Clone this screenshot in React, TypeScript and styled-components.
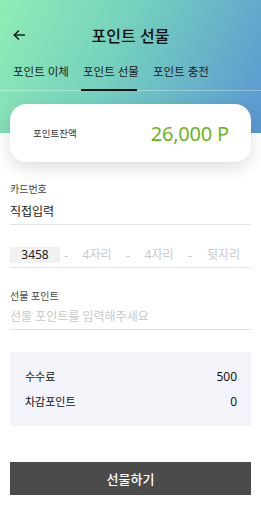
import styled, { createGlobalStyle } from 'styled-components'

const GlobalStyle = createGlobalStyle`
  html, body {
    margin: 0;
    padding: 0;
    background: #ffffff;
  }
  body {
    font-family: 'Noto Sans', 'Noto Sans CJK KR', sans-serif;
    color: #222;
  }
`

const Page = styled.div`
  width: 261px;
  min-height: 512px;
  background: #fff;
`

const Header = styled.header`
  height: 133px;
  background: linear-gradient(115deg, #90edb4 0%, #74cfbf 45%, #5a96d3 100%);
`

const TitleBar = styled.div`
  position: relative;
  height: 26px;
  padding-top: 23px;
  display: flex;
  align-items: center;
  justify-content: center;
`

const BackButton = styled.button`
  position: absolute;
  left: 9px;
  top: 25px;
  width: 20px;
  height: 20px;
  padding: 0;
  border: 0;
  background: none;
  display: flex;
  align-items: center;
  justify-content: center;
`

const Title = styled.h1`
  margin: 0;
  font-size: 16px;
  line-height: 22px;
  font-weight: 500;
  color: #111;
`

const Tabs = styled.nav`
  margin-top: 13px;
  height: 28px;
  display: flex;
  padding: 0 0 0 13px;
  border-bottom: 1px solid rgba(255, 255, 255, 0.35);
`

const Tab = styled.div<{ $active?: boolean }>`
  position: relative;
  width: 70px;
  padding-top: 2px;
  font-size: 11.5px;
  line-height: 16px;
  font-weight: 400;
  color: #1a1a1a;
  &::after {
    content: '';
    position: absolute;
    left: -2px;
    width: 56px;
    bottom: -1px;
    height: 2px;
    background: ${(p) => (p.$active ? '#111' : 'transparent')};
  }
`

const BalanceCard = styled.div`
  margin: -29px 10px 0;
  height: 58px;
  padding: 0 22px 0 23px;
  border-radius: 16px;
  background: #fff;
  box-shadow: 0 6px 16px rgba(0, 0, 0, 0.13);
  display: flex;
  align-items: center;
  justify-content: space-between;
  position: relative;
`

const BalanceLabel = styled.span`
  font-size: 9.5px;
  color: #333;
`

const BalanceValue = styled.span`
  font-size: 20px;
  font-weight: 400;
  color: #6cb41b;
  letter-spacing: -0.2px;
`

const Form = styled.div`
  padding: 0 10px;
`

const Label = styled.div<{ $top: number }>`
  margin-top: ${(p) => p.$top}px;
  height: 14px;
  font-size: 10px;
  line-height: 14px;
  color: #444;
`

const Field = styled.div<{ $top: number }>`
  margin-top: ${(p) => p.$top}px;
  height: 18px;
  padding-bottom: 3px;
  border-bottom: 1px solid #e2e2e2;
  display: flex;
  align-items: center;
`

const FieldText = styled.span<{ $placeholder?: boolean }>`
  font-size: 12px;
  line-height: 18px;
  color: ${(p) => (p.$placeholder ? '#c9c9c9' : '#222')};
`

const CardRow = styled(Field)`
  height: 16px;
  padding-bottom: 4px;
`

const CardBox = styled.span`
  width: 50px;
  height: 16px;
  background: #f1f1f1;
  font-size: 12px;
  line-height: 16px;
  text-align: center;
  color: #222;
`

const Dash = styled.span`
  width: 12px;
  text-align: center;
  font-size: 11px;
  line-height: 16px;
  color: #bbb;
`

const CardPart = styled.span<{ $w: number }>`
  width: ${(p) => p.$w}px;
  text-align: center;
  font-size: 12px;
  line-height: 16px;
  color: #c9c9c9;
`

const FeeBox = styled.div`
  margin-top: 22px;
  height: 74px;
  padding: 0 14px 0 15px;
  background: #f3f4f9;
  display: flex;
  flex-direction: column;
  justify-content: center;
  gap: 9px;
`

const FeeRow = styled.div`
  display: flex;
  justify-content: space-between;
  align-items: center;
  font-size: 11px;
  line-height: 16px;
  color: #111;
`

const FeeValue = styled.span`
  font-size: 12px;
  font-weight: 400;
`

const SubmitButton = styled.button`
  display: block;
  margin-top: 36px;
  width: 100%;
  height: 33px;
  border: 0;
  background: #4b4b4b;
  color: #fff;
  font-family: 'Noto Sans CJK KR', 'Noto Sans', sans-serif;
  font-size: 13px;
  font-weight: 500;
`

const ArrowIcon = () => (
  <svg width="14" height="14" viewBox="0 0 24 24" fill="none" stroke="#111" strokeWidth="2.4" strokeLinecap="square">
    <path d="M21 12H4" />
    <path d="M11 5l-7 7 7 7" />
  </svg>
)

export default function App() {
  return (
    <Page>
      <GlobalStyle />
      <Header>
        <TitleBar>
          <BackButton aria-label="뒤로">
            <ArrowIcon />
          </BackButton>
          <Title>포인트 선물</Title>
        </TitleBar>
        <Tabs>
          <Tab>포인트 이체</Tab>
          <Tab $active>포인트 선물</Tab>
          <Tab>포인트 충전</Tab>
        </Tabs>
      </Header>
      <BalanceCard>
        <BalanceLabel>포인트잔액</BalanceLabel>
        <BalanceValue>26,000 P</BalanceValue>
      </BalanceCard>
      <Form>
        <Label $top={20}>카드번호</Label>
        <Field $top={7}>
          <FieldText>직접입력</FieldText>
        </Field>
        <CardRow $top={22}>
          <CardBox>3458</CardBox>
          <Dash>-</Dash>
          <CardPart $w={50}>4자리</CardPart>
          <Dash>-</Dash>
          <CardPart $w={50}>4자리</CardPart>
          <Dash>-</Dash>
          <CardPart $w={55}>뒷자리</CardPart>
        </CardRow>
        <Label $top={21}>선물 포인트</Label>
        <Field $top={5}>
          <FieldText $placeholder>선물 포인트를 입력해주세요</FieldText>
        </Field>
        <FeeBox>
          <FeeRow>
            <span>수수료</span>
            <FeeValue>500</FeeValue>
          </FeeRow>
          <FeeRow>
            <span>차감포인트</span>
            <FeeValue>0</FeeValue>
          </FeeRow>
        </FeeBox>
        <SubmitButton>선물하기</SubmitButton>
      </Form>
    </Page>
  )
}
